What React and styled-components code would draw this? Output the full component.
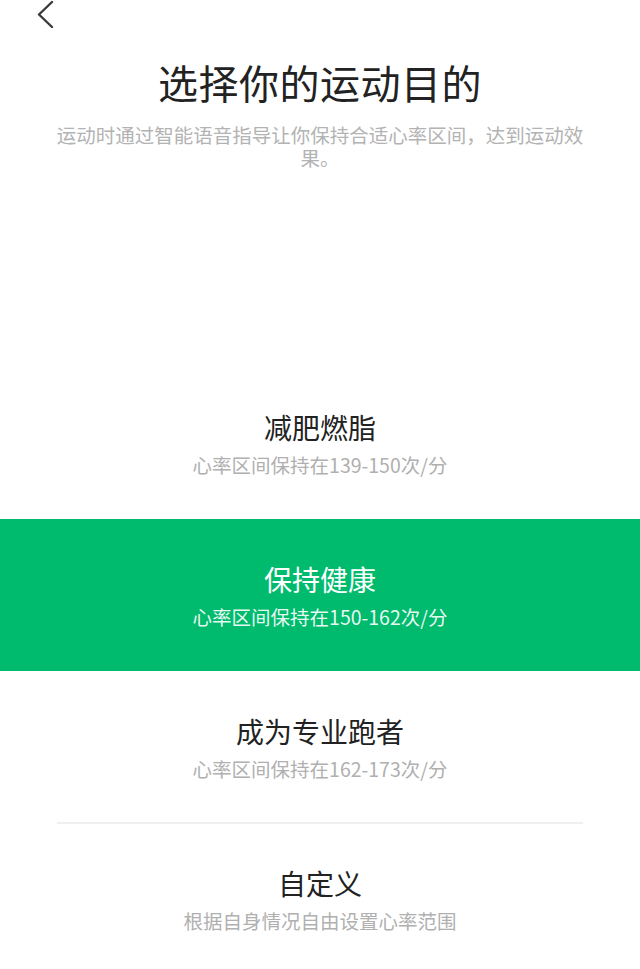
import React, { useState } from "react";
import styled, { createGlobalStyle } from "styled-components";

const GlobalStyle = createGlobalStyle`
    html, body {
        margin: 0;
        padding: 0;
        background: #ffffff;
    }
    body {
        font-family: "Noto Sans CJK SC", "Noto Sans", sans-serif;
        -webkit-font-smoothing: antialiased;
    }
`

const Page = styled.div`
    width: 640px;
    height: 969px;
    overflow: hidden;
    display: flex;
    flex-direction: column;
    background: #ffffff;
`

const TopBar = styled.div`
    height: 34px;
    display: flex;
    align-items: center;
    padding-left: 37px;
    button {
        border: none;
        background: none;
        padding: 0;
        display: flex;
        cursor: pointer;
    }
`

const Title = styled.h1`
    margin: 30px 0 0 0;
    font-size: 40px;
    line-height: 48px;
    font-weight: 400;
    color: #222222;
    text-align: center;
    letter-spacing: 0.5px;
`

const Subtitle = styled.p`
    margin: 17px 0 0 0;
    padding: 0 54px;
    font-size: 19.5px;
    line-height: 23px;
    color: #b3b3b3;
    text-align: center;
`

const List = styled.div`
    margin-top: 198px;
    display: flex;
    flex-direction: column;
`

const Item = styled.div`
    position: relative;
    height: 152px;
    display: flex;
    flex-direction: column;
    align-items: center;
    justify-content: center;
    gap: 9px;
    background: ${p => (p.$active ? "#00bb6e" : "transparent")};
    cursor: pointer;
    ${p => p.$divider && `
        &::before {
            content: "";
            position: absolute;
            top: -1px;
            left: 57px;
            right: 57px;
            height: 2px;
            background: #efefef;
        }
    `}
`

const ItemTitle = styled.div`
    font-size: 28px;
    line-height: 34px;
    color: ${p => (p.$active ? "#ffffff" : "#222222")};
`

const ItemDesc = styled.div`
    font-size: 19.5px;
    line-height: 24px;
    color: ${p => (p.$active ? "rgba(255,255,255,0.92)" : "#b0b0b0")};
`

const goals = [
    { title: "减肥燃脂", desc: "心率区间保持在139-150次/分" },
    { title: "保持健康", desc: "心率区间保持在150-162次/分" },
    { title: "成为专业跑者", desc: "心率区间保持在162-173次/分" },
    { title: "自定义", desc: "根据自身情况自由设置心率范围" },
]

export default function App() {
    const [selected, setSelected] = useState(1);
    return <>
        <GlobalStyle />
        <Page>
            <TopBar>
                <button aria-label="返回">
                    <svg width="17" height="28" viewBox="0 0 17 28">
                        <path d="M15 2 L2 14.5 L15 27" fill="none" stroke="#3a3a3a" strokeWidth="2.4" strokeLinecap="round" strokeLinejoin="round" />
                    </svg>
                </button>
            </TopBar>

            <Title>选择你的运动目的</Title>
            <Subtitle>运动时通过智能语音指导让你保持合适心率区间，达到运动效果。</Subtitle>

            <List>
                {goals.map((g, i) => {
                    const active = i === selected;
                    const divider = i > 0 && !active && i - 1 !== selected;
                    return <Item key={g.title} $active={active} $divider={divider} onClick={() => setSelected(i)}>
                        <ItemTitle $active={active}>{g.title}</ItemTitle>
                        <ItemDesc $active={active}>{g.desc}</ItemDesc>
                    </Item>
                })}
            </List>
        </Page>
    </>
}
